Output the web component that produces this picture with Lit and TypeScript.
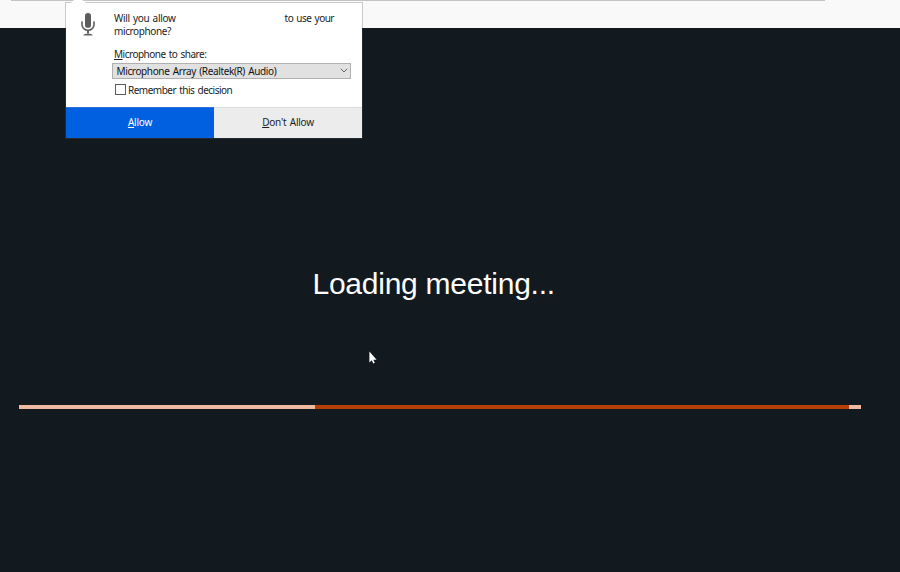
import { LitElement, html, css, svg } from "lit";
import { customElement, property } from "lit/decorators.js";

const micIcon = svg`
  <rect x="4" y="0" width="6" height="15.500" rx="3" fill="#5c5c5c"></rect>
  <path d="M1 9.5V12a6 6 0 0 0 12 0V9.5" fill="none" stroke="#666" stroke-width="1.700" stroke-linecap="round"></path>
  <path d="M7 18v3.5" stroke="#5c5c5c" stroke-width="2"></path>
  <path d="M2.300 23.600c.3-1.500 1.700-2 4.700-2s4.400.5 4.700 2z" fill="#5c5c5c"></path>`;

@customElement("permission-prompt")
export class PermissionPrompt extends LitElement {
  @property() device = "Microphone Array (Realtek(R) Audio)";

  static styles = css`
    :host {
      display: flex;
      flex-direction: column;
      box-sizing: border-box;
      width: 296px;
      height: 135px;
      background: #fff;
      color: #1c1c1c;
      font: 10px/13px "Noto Sans", "Open Sans", sans-serif;
      letter-spacing: -0.5px;
      word-spacing: 1px;
      white-space: nowrap;
      box-shadow: 0 0 0 1px rgba(80, 80, 80, 0.28);
    }
    .body {
      display: flex;
      height: 104px;
    }
    .icon {
      width: 46px;
      flex: none;
    }
    .icon svg {
      display: block;
      margin: 10px 0 0 14.500px;
      overflow: visible;
    }
    .content {
      flex: 1;
      padding: 9px 11px 0 0;
    }
    .question {
      display: flex;
      width: 222px;
      padding-left: 2px;
      justify-content: space-between;
      height: 13px;
      box-sizing: border-box;
    }
    .asker {
      letter-spacing: -0.33px;
    }
    .line,
    .label {
      padding-left: 2px;
    }
    .line {
      letter-spacing: -0.4px;
    }
    .label {
      margin-top: 10px;
    }
    u {
      text-decoration-thickness: 1px;
      text-underline-offset: 1px;
    }
    .select {
      display: flex;
      align-items: center;
      justify-content: space-between;
      box-sizing: border-box;
      height: 16px;
      width: 239px;
      margin-top: 2px;
      padding: 1px 2px 0 3.500px;
      border: 1px solid #b0b0b0;
      background: #e1e1e1;
      color: #111;
      letter-spacing: -0.37px;
    }
    .select svg {
      margin-top: -3px;
    }
    .remember {
      display: flex;
      align-items: center;
      gap: 2px;
      height: 13px;
      margin: 5px 0 0 3px;
    }
    .box {
      box-sizing: border-box;
      width: 11px;
      height: 11px;
      margin-top: -2px;
      border: 1px solid #5a5a5a;
    }
    .actions {
      display: flex;
      height: 31px;
      letter-spacing: -0.22px;
    }
    .action {
      display: flex;
      align-items: center;
      justify-content: center;
      box-sizing: border-box;
      flex: 1;
      padding-bottom: 1px;
      background: #ececec;
      border-top: 1px solid #dcdcdc;
    }
    .primary {
      background: #0060df;
      border-color: #2b72d8;
      color: #fff;
    }
  `;

  render() {
    return html`
      <div class="body">
        <div class="icon"><svg width="14" height="23" viewBox="0 0 14 24" preserveAspectRatio="none">${micIcon}</svg></div>
        <div class="content">
          <div class="question"><span class="asker">Will you allow</span><span>to use your</span></div>
          <div class="line">microphone?</div>
          <div class="label"><u>M</u>icrophone to share:</div>
          <div class="select">
            <span>${this.device}</span>
            <svg width="8" height="5" viewBox="0 0 8 5"><path d="M.8.8 4 4 7.200.8" fill="none" stroke="#666" stroke-width="1"></path></svg>
          </div>
          <div class="remember"><span class="box"></span><span>Remember this decision</span></div>
        </div>
      </div>
      <div class="actions">
        <div class="action primary"><span><u>A</u>llow</span></div>
        <div class="action"><span><u>D</u>on't Allow</span></div>
      </div>
    `;
  }
}

@customElement("app-root")
export class AppRoot extends LitElement {
  static styles = css`
    :host {
      display: flex;
      flex-direction: column;
      position: relative;
      width: 900px;
      height: 572px;
      overflow: hidden;
      background: #121a20;
    }
    .toolbar {
      flex: none;
      box-sizing: border-box;
      height: 28px;
      background: #f9f9fa;
    }
    .field-edge {
      width: 814px;
      height: 1px;
      margin-left: 11px;
      background: #c4c4c4;
    }
    permission-prompt {
      position: absolute;
      left: 66px;
      top: 3px;
    }
    .arrow {
      position: absolute;
      left: 71px;
      top: 0;
      display: block;
    }
    .page {
      display: flex;
      flex-direction: column;
      flex: 1;
    }
    .title {
      margin: 239px 0 0 312.500px;
      font: 30px/34px "Liberation Sans", Arial, sans-serif;
      letter-spacing: -0.25px;
      color: #fff;
      white-space: nowrap;
    }
    .progress {
      display: flex;
      width: 842px;
      height: 4px;
      margin: 104px 0 0 19px;
      background: #edb9a0;
    }
    .bar {
      width: 534px;
      margin-left: 296px;
      background: #b53f04;
    }
    .cursor {
      position: absolute;
      left: 369px;
      top: 351px;
    }
  `;

  render() {
    return html`
      <div class="toolbar"><div class="field-edge"></div></div>
      <div class="page">
        <div class="title">Loading meeting...</div>
        <div class="progress"><div class="bar"></div></div>
      </div>
      <permission-prompt></permission-prompt>
      <svg class="arrow" width="16" height="3" viewBox="0 0 16 3"><path d="M0 3 3 0h8l4 3z" fill="#fff"></path></svg>
      <svg class="cursor" width="8" height="13" viewBox="0 0 8 13">
        <path d="M.4.5v11l2.300-2.200 1.600 3.200 1.500-.7-1.500-3h3.300z" fill="#fff"></path>
      </svg>
    `;
  }
}
